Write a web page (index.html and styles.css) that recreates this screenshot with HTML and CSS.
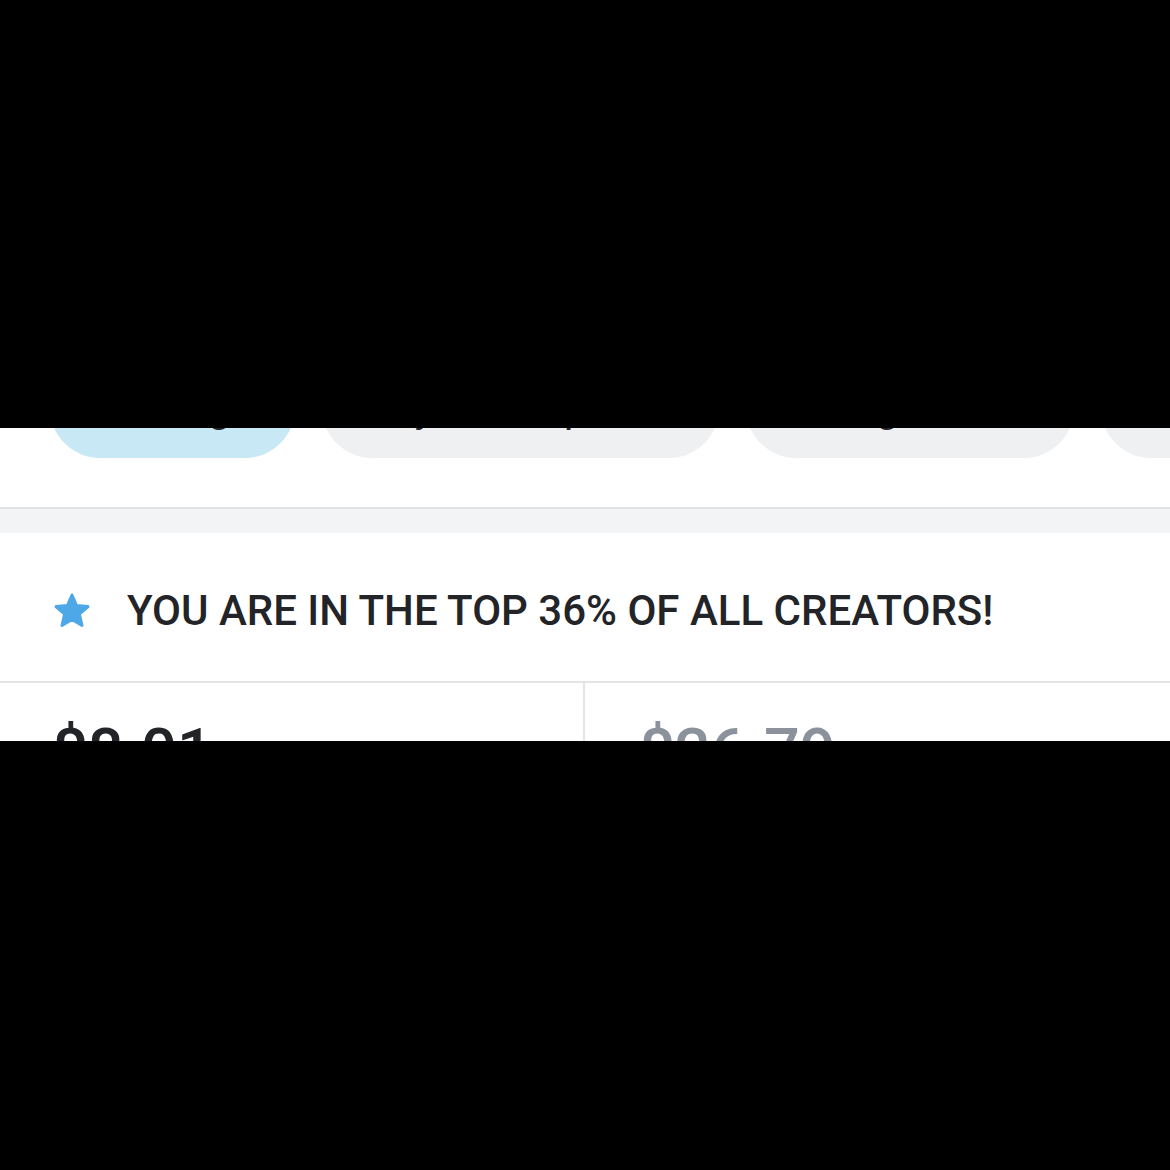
FILE: index.html
```html
<!DOCTYPE html>
<html lang="en">
<head>
<meta charset="UTF-8">
<meta name="viewport" content="width=device-width, initial-scale=1.0">
<title>Statements</title>
<link rel="stylesheet" href="styles.css">
</head>
<body>

<div class="screen">
    <div class="tabs">
        <div class="tab active">Earnings</div>
        <div class="tab">Payout Requests</div>
        <div class="tab">Chargebacks</div>
        <div class="tab">Referrals</div>
    </div>

    <div class="gap"></div>

    <div class="rank">
        <svg class="star" viewBox="0 0 40 40" width="40" height="40">
            <polygon points="20,4 24.6,14.6 36,15.6 27.4,23.2 30,34.4 20,28.4 10,34.4 12.6,23.2 4,15.6 15.4,14.6"
                     fill="#4ea8e7" stroke="#4ea8e7" stroke-width="3" stroke-linejoin="round"/>
        </svg>
        <span>YOU ARE IN THE TOP 36% OF ALL CREATORS!</span>
    </div>

    <div class="totals">
        <div class="total">
            <div class="amount">$8.01</div>
            <div class="label">Current balance</div>
        </div>
        <div class="total pending">
            <div class="amount">$26.79</div>
            <div class="label">Pending balance</div>
        </div>
    </div>
</div>

</body>
</html>
```

FILE: styles.css
```css
body {
    margin: 0;
    padding-top: 428px;
    height: 742px;
    background-color: #000;
    font-family: Roboto, "Liberation Sans", sans-serif;
    color: #232427;
}
.screen {
    height: 313px;
    overflow: hidden;
    background-color: #fff;
}
.tabs {
    display: flex;
    gap: 27px;
    margin-top: -70px;
    padding: 0 50px 49px;
    overflow: hidden;
}
.tab {
    flex: none;
    height: 100px;
    line-height: 100px;
    padding: 0 45px;
    border-radius: 50px;
    background-color: #eff0f2;
    font-size: 41px;
    white-space: nowrap;
}
.tab.active {
    padding: 0 43px;
    background-color: #c9e8f6;
}
.gap {
    height: 24px;
    border-top: 2px solid #e2e3e6;
    background-color: #f3f4f6;
}
.rank {
    display: flex;
    align-items: center;
    height: 148px;
    padding-left: 52px;
    border-bottom: 2px solid #e4e5e7;
    font-size: 42px;
    font-weight: 500;
}
.rank span {
    margin-left: 35px;
    padding-top: 6px;
}
.star {
    flex: none;
    margin-top: 8px;
}
.totals {
    display: flex;
}
.total {
    flex: 1;
    padding: 32px 52px;
}
.total + .total {
    border-left: 2px solid #e4e5e7;
    padding-left: 54px;
}
.amount {
    font-size: 63px;
    font-weight: 500;
}
.pending .amount {
    color: #8b929c;
}
.label {
    font-size: 34px;
    color: #8b929c;
}
```
